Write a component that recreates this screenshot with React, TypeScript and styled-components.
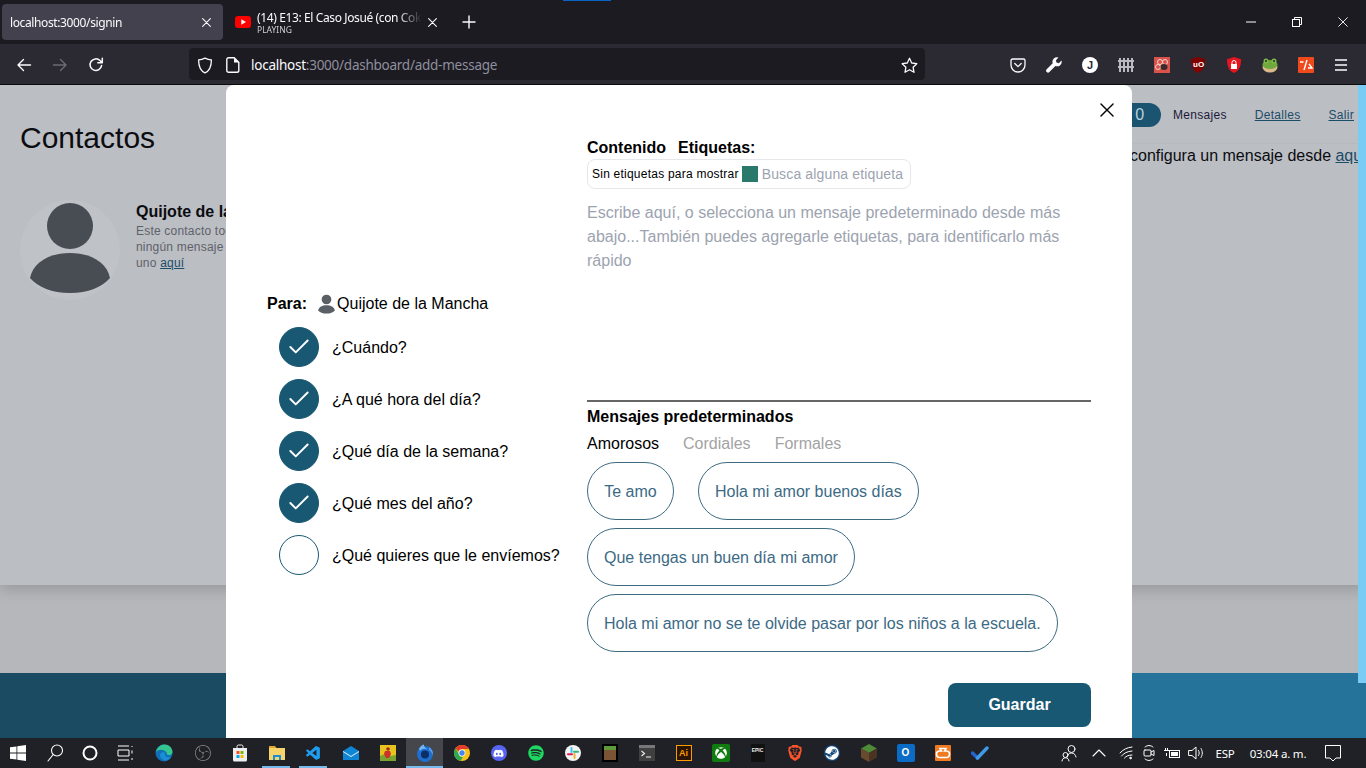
import React from "react";
import styled, { createGlobalStyle } from "styled-components";
import { Check } from "lucide-react";
import { FaDiscord, FaSpotify, FaSteam, FaXbox } from "react-icons/fa";
import { VscVscode } from "react-icons/vsc";
import { SiBrave, SiObsstudio } from "react-icons/si";

const Global = createGlobalStyle`
  html, body { margin: 0; padding: 0; background: #1c1b22; }
  * { box-sizing: border-box; }
  body { font-family: "Liberation Sans", Arial, sans-serif; }
`;

const Shell = styled.div`
  width: 1366px;
  height: 768px;
  display: flex;
  flex-direction: column;
  overflow: hidden;
`;

/* ---------- browser chrome ---------- */
const TabBar = styled.div`
  position: relative;
  flex: 0 0 44px;
  display: flex;
  background: #1c1b22;
  padding: 4px 0 4px 2px;
  font-family: "Noto Sans", sans-serif;
  color: #fbfbfe;
`;
const Indicator = styled.div`
  position: absolute;
  left: 563px;
  top: 0;
  width: 48px;
  height: 1px;
  background: #0a64c8;
`;
const Tab = styled.div<{ $active?: boolean }>`
  width: 221px;
  height: 36px;
  margin-right: 6px;
  padding: 0 ${(p) => (p.$active ? "12px" : "13px")} 0 ${(p) => (p.$active ? "8px" : "6px")};
  display: flex;
  align-items: center;
  gap: 6px;
  border-radius: 4px;
  background: ${(p) => (p.$active ? "#42414d" : "transparent")};
`;
const TabText = styled.div`
  flex: 1;
  min-width: 0;
  display: flex;
  flex-direction: column;
  white-space: nowrap;
  overflow: hidden;
  mask-image: linear-gradient(to right, #000 85%, transparent);
`;
const TabTitle = styled.span`
  font-size: 12px;
  line-height: 15px;
  letter-spacing: -0.38px;
`;
const TabSub = styled.span`
  font-size: 8.5px;
  line-height: 10px;
  color: #cfcfd6;
`;
const PlusBox = styled.div`
  width: 36px;
  height: 36px;
  margin-left: -5px;
  display: flex;
  align-items: center;
  justify-content: center;
`;
const WindowControls = styled.div`
  margin-left: auto;
  display: flex;
`;
const WinBtn = styled.div`
  width: 46px;
  height: 36px;
  display: flex;
  align-items: center;
  justify-content: center;
`;
const Toolbar = styled.div`
  flex: 0 0 41px;
  display: flex;
  align-items: flex-start;
  padding: 4px 6px 0;
  background: #2b2a33;
  border-bottom: 1px solid #0c0c0d;
`;
const ToolGroup = styled.div<{ $push?: boolean }>`
  display: flex;
  margin-left: ${(p) => (p.$push ? "auto" : "0")};
`;
const ToolBtn = styled.div`
  width: 36px;
  height: 32px;
  padding-top: 2px;
  display: flex;
  align-items: center;
  justify-content: center;
`;
const UrlBar = styled.div`
  margin-left: 75px;
  width: 736px;
  height: 32px;
  border-radius: 4px;
  background: #1c1b22;
  display: flex;
  align-items: center;
  padding: 2px 7px 0 2px;
  font-family: "Noto Sans", sans-serif;
  font-size: 13.5px;
  letter-spacing: -0.25px;
  color: #fbfbfe;
`;
const UrlIcon = styled.span`
  display: flex;
  width: 28px;
  flex: 0 0 28px;
  justify-content: center;
`;
const UrlText = styled.span`
  flex: 1;
  margin-left: 4px;
`;
const UrlDim = styled.span`
  color: #8f8f9d;
`;

/* ---------- page behind the modal ---------- */
const Page = styled.div`
  position: relative;
  flex: 1;
  min-height: 0;
  display: flex;
  flex-direction: column;
  background: #b5b7bb;
  overflow: hidden;
`;
const MainCard = styled.section`
  position: relative;
  z-index: 1;
  flex: 0 0 500px;
  display: flex;
  justify-content: space-between;
  padding-right: 8px;
  background: #bbbec3;
  box-shadow: 0 4px 14px rgba(0, 0, 0, 0.18);
  color: #0b0c10;
`;
const Spacer = styled.div`
  flex: 1;
`;
const Footer = styled.footer`
  flex: 0 0 65px;
  background: linear-gradient(to right, #1b4b62 17%, #25729b 83%);
`;
const Scrollbar = styled.div`
  position: absolute;
  z-index: 2;
  right: 0;
  top: 0;
  width: 8px;
  height: 598px;
  background: #7accf5;
`;
const ContactsPane = styled.div`
  padding: 35px 20px 0;
  width: 500px;
`;
const ContactsTitle = styled.h1`
  margin: 0 0 44px;
  font-size: 30px;
  line-height: 36px;
  font-weight: 400;
`;
const ContactRow = styled.div`
  display: flex;
  gap: 16px;
`;
const AvatarFrame = styled.div`
  flex: 0 0 100px;
  width: 100px;
  height: 100px;
  border-radius: 50%;
  background: #bfc2c6;
  color: #484d54;
`;
const ContactName = styled.div`
  font-size: 16px;
  line-height: 24px;
  margin-bottom: -1px;
  font-weight: 700;
`;
const ContactDesc = styled.p`
  margin: 0;
  width: 220px;
  font-size: 12px;
  line-height: 16px;
  letter-spacing: 0.2px;
  color: #5e6269;
`;
const DimLink = styled.a`
  color: #1b4c68;
  text-decoration: underline;
`;
const SidePane = styled.div`
  width: 358px;
  padding-top: 18px;
`;
const Nav = styled.nav`
  display: flex;
  align-items: center;
  justify-content: flex-end;
  gap: 28px;
  height: 24px;
  padding-right: 4px;
  margin-bottom: 16px;
  font-size: 12px;
  letter-spacing: 0.3px;
`;
const Pill = styled.span`
  width: 42px;
  height: 24px;
  margin-right: -16px;
  border-radius: 12px;
  background: #1b5470;
  color: #b9d2de;
  font-size: 16px;
  line-height: 24px;
  text-align: center;
`;
const NavLabel = styled.span`
  color: #1c1a38;
`;
const Notice = styled.div`
  border-top: 1px solid #b6b9be;
  margin-top: 0;
  padding-left: 130px;
  font-size: 16px;
  line-height: 23px;
  white-space: nowrap;
  overflow: hidden;
`;

/* ---------- modal ---------- */
const Modal = styled.div`
  position: absolute;
  z-index: 3;
  left: 226px;
  top: 0;
  width: 906px;
  height: 653px;
  padding: 50px 41px 0;
  display: flex;
  background: #fff;
  border-radius: 8px 8px 0 0;
  color: #000;
`;
const CloseBtn = styled.button`
  position: absolute;
  top: 15px;
  right: 15px;
  width: 20px;
  height: 20px;
  padding: 0;
  border: 0;
  background: none;
  display: flex;
  align-items: center;
  justify-content: center;
`;
const StepsColumn = styled.div`
  flex: 0 0 320px;
  padding-top: 156px;
`;
const ToLine = styled.div`
  display: flex;
  align-items: center;
  height: 24px;
  padding-top: 2px;
  font-size: 16px;
`;
const ToLabel = styled.strong`
  margin-right: 9px;
`;
const ToAvatar = styled.span`
  display: flex;
  width: 21px;
  height: 21px;
  color: #5b6066;
`;
const Steps = styled.ul`
  list-style: none;
  margin: 12px 0 0;
  padding: 0 0 0 12px;
  display: flex;
  flex-direction: column;
  gap: 12px;
`;
const Step = styled.li`
  display: flex;
  align-items: center;
  gap: 13px;
  height: 40px;
  font-size: 16px;
`;
const StepLabel = styled.span`
  padding-top: 2px;
`;
const StepDot = styled.span<{ $done: boolean }>`
  flex: 0 0 40px;
  height: 40px;
  border-radius: 50%;
  display: flex;
  align-items: center;
  justify-content: center;
  color: #fff;
  background: ${(p) => (p.$done ? "#185873" : "#fff")};
  border: 1px solid #185873;
`;
const ContentColumn = styled.div`
  flex: 1;
  display: flex;
  flex-direction: column;
`;
const HeadRow = styled.div`
  display: flex;
  gap: 12px;
  height: 24px;
  padding-top: 1px;
  font-size: 16px;
  line-height: 24px;
  font-weight: 700;
`;
const TagBox = styled.div`
  width: 324px;
  height: 30px;
  display: flex;
  align-items: center;
  padding: 0 4px;
  border: 1px solid #e5e7eb;
  border-radius: 8px;
  font-size: 12px;
  letter-spacing: 0.23px;
`;
const TagSwatch = styled.span`
  flex: 0 0 16px;
  height: 16px;
  margin: 0 4px 0 3px;
  background: #2a7a6b;
`;
const TagInput = styled.input`
  flex: 1;
  min-width: 0;
  border: 0;
  padding: 0;
  outline: none;
  font: 14px "Liberation Sans", Arial, sans-serif;
  letter-spacing: 0.14px;
  &::placeholder {
    color: #9ca3af;
    opacity: 1;
  }
`;
const MessageArea = styled.textarea`
  display: block;
  width: 504px;
  height: 200px;
  margin: 11px 0 0;
  padding: 1px 0 0;
  border: 0;
  outline: none;
  resize: none;
  overflow: hidden;
  font: 16px/24px "Liberation Sans", Arial, sans-serif;
  &::placeholder {
    color: #9ca3af;
    opacity: 1;
  }
`;
const Rule = styled.hr`
  width: 100%;
  height: 2px;
  margin: 0;
  border: 0;
  background: #666;
`;
const PresetTitle = styled.div`
  margin-top: 3px;
  font-size: 16px;
  line-height: 24px;
  font-weight: 700;
`;
const PresetTabs = styled.div`
  display: flex;
  gap: 24px;
  margin-top: 3px;
  font-size: 16px;
  line-height: 24px;
`;
const PresetTab = styled.span<{ $active?: boolean }>`
  color: ${(p) => (p.$active ? "#000" : "#a3a3a3")};
`;
const Chips = styled.div`
  display: flex;
  flex-wrap: wrap;
  gap: 8px 24px;
  margin-top: 6px;
`;
const Chip = styled.button`
  height: 58px;
  min-width: 87px;
  padding: 2px 16px 0;
  border: 1px solid #3d6b82;
  border-radius: 29px;
  background: #fff;
  color: #3c6a85;
  font: 16px "Liberation Sans", Arial, sans-serif;
  white-space: nowrap;
`;
const SaveRow = styled.div`
  display: flex;
  justify-content: flex-end;
  margin-top: 31px;
`;
const SaveBtn = styled.button`
  width: 143px;
  height: 44px;
  border: 0;
  border-radius: 8px;
  background: #185873;
  color: #fff;
  font: 700 16px "Liberation Sans", Arial, sans-serif;
`;

/* ---------- taskbar ---------- */
const Taskbar = styled.div`
  flex: 0 0 30px;
  display: flex;
  align-items: stretch;
  background: #202126;
  color: #fff;
  font-family: "Noto Sans", sans-serif;
`;
const TaskSlot = styled.div<{ $w?: number; $active?: boolean; $mark?: boolean }>`
  position: relative;
  flex: 0 0 ${(p) => p.$w ?? 37}px;
  display: flex;
  align-items: center;
  justify-content: center;
  background: ${(p) => (p.$active ? "#45474d" : "transparent")};
  &::after {
    content: "";
    display: ${(p) => (p.$active || p.$mark ? "block" : "none")};
    position: absolute;
    bottom: 0;
    left: ${(p) => (p.$active ? "0" : "4px")};
    right: ${(p) => (p.$active ? "0" : "5px")};
    height: 2px;
    background: #76b9ed;
  }
`;
const Tray = styled.div`
  margin-left: auto;
  display: flex;
  align-items: center;
`;
const TraySlot = styled.div<{ $w: number; $l?: number; $r?: number }>`
  width: ${(p) => p.$w}px;
  padding: 0 ${(p) => p.$r ?? 0}px 0 ${(p) => p.$l ?? 0}px;
  display: flex;
  justify-content: center;
  align-items: center;
  font-size: 11.5px;
  letter-spacing: -0.2px;
  white-space: nowrap;
`;
const AiBadge = styled.span`
  width: 16px;
  height: 16px;
  border: 1px solid #ff9a00;
  background: #2a1500;
  color: #ff9a00;
  font: 700 9px/14px "Liberation Sans", sans-serif;
  text-align: center;
`;
const LetterTile = styled.span<{ $bg: string }>`
  width: 18px;
  height: 18px;
  border-radius: 2px;
  background: ${(p) => p.$bg};
  color: #fff;
  font: 700 10px/18px "Liberation Sans", sans-serif;
  text-align: center;
`;
const EpicTile = styled.span`
  width: 14px;
  height: 18px;
  border-radius: 1px;
  background: #111;
  color: #eee;
  font: 700 5px/8px "Liberation Sans", sans-serif;
  padding-top: 2px;
  text-align: center;
`;
const Uo = styled.text`
  font: 700 8px "Liberation Sans", sans-serif;
  fill: #fff;
`;
const J = styled.span`
  width: 16px;
  height: 16px;
  border-radius: 50%;
  background: #fff;
  color: #2b2a33;
  font: 700 11px/16px "Liberation Sans", sans-serif;
  text-align: center;
`;

/* ---------- drawings ---------- */
type S = { s?: number };
const Line = (p: React.SVGProps<SVGSVGElement>) => (
  <svg fill="none" stroke="currentColor" strokeLinecap="round" strokeLinejoin="round" {...p} />
);
const X = ({ s = 9, c = "#fbfbfe", w = 1.2 }: S & { c?: string; w?: number }) => (
  <Line width={s} height={s} viewBox="0 0 10 10" style={{ color: c }} strokeWidth={w}>
    <path d="M.7.7l8.6 8.6M9.3.7L.7 9.3" />
  </Line>
);
const Person = () => (
  <svg width="100%" height="100%" viewBox="0 0 100 100" fill="currentColor">
    <circle cx="50" cy="26" r="23" />
    <path d="M10 78C13 62 30 53 50 53s37 9 40 25c-8 9-22 15-40 15S18 87 10 78z" />
  </svg>
);
const YouTube = () => (
  <svg width="16" height="12" viewBox="0 0 16 12">
    <rect width="16" height="12" rx="3" fill="#f00" />
    <path d="M6.3 3.3v5.4L11 6z" fill="#fff" />
  </svg>
);
const Back = () => (
  <Line width="16" height="16" viewBox="0 0 16 16" color="#fbfbfe" strokeWidth="1.4">
    <path d="M14.5 8H2M7.5 2.5L2 8l5.5 5.5" />
  </Line>
);
const Forward = () => (
  <Line width="16" height="16" viewBox="0 0 16 16" color="#6c6b74" strokeWidth="1.4">
    <path d="M1.5 8H14M8.5 2.5L14 8l-5.5 5.5" />
  </Line>
);
const Reload = () => (
  <Line width="16" height="16" viewBox="0 0 16 16" color="#fbfbfe" strokeWidth="1.5">
    <path d="M13.6 8.4A5.8 5.8 0 1 1 12 3.6L14 5.6M14.3 1.2v4.5H9.8" />
  </Line>
);
const Shield = () => (
  <Line width="16" height="17" viewBox="0 0 16 17" color="#fbfbfe" strokeWidth="1.3">
    <path d="M8 1.2c2 1 4 1.6 6.4 1.7 0 6.500-1.800 10.800-6.400 13-4.600-2.200-6.400-6.500-6.400-13C4 2.800 6 2.200 8 1.200z" />
  </Line>
);
const PageIcon = () => (
  <svg width="14" height="16" viewBox="0 0 14 16">
    <path d="M2.600.8h5.600l4.600 4.600v8a1.800 1.800 0 0 1-1.800 1.800H2.600A1.800 1.800 0 0 1 .8 13.400V2.600A1.800 1.800 0 0 1 2.600.8z" fill="none" stroke="#fbfbfe" strokeWidth="1.400" />
    <path d="M8 1v4.600h4.600z" fill="#fbfbfe" />
  </svg>
);
const Star = () => (
  <Line width="17" height="17" viewBox="0 0 17 17" color="#fbfbfe" strokeWidth="1.3">
    <path d="M8.500 1.300l2.200 4.700 5.100.7-3.700 3.500.9 5.100-4.500-2.500L4 15.300l.9-5.100L1.200 6.700l5.100-.7z" />
  </Line>
);
const Pocket = () => (
  <Line width="16" height="15" viewBox="0 0 16 15" color="#fbfbfe" strokeWidth="1.300">
    <path d="M2.500 1h11A1.500 1.500 0 0 1 15 2.500V7A7 7 0 0 1 1 7V2.500A1.500 1.500 0 0 1 2.500 1z" />
    <path d="M4.800 5.500L8 8.600l3.200-3.100" />
  </Line>
);
const Wrench = () => (
  <svg width="16" height="16" viewBox="0 0 16 16" fill="#fbfbfe">
    <path d="M15.500 3.500l-2.700 2.700-2.300-.6-.6-2.300L12.500.6a4.500 4.500 0 0 0-5.800 5.700L.7 12.300a1.900 1.900 0 0 0 2.700 2.700l6-6.100a4.500 4.500 0 0 0 6.100-5.400z" />
  </svg>
);
const Rail = () => (
  <svg width="16" height="14" viewBox="0 0 16 14" fill="#b9b9bf">
    <path d="M0 2h16v2H0zM0 8h16v2H0zM1 0h2v14H1zM5 0h2v14H5zM9 0h2v14H9zM13 0h2v14h-2z" />
  </svg>
);
const BugTile = () => (
  <svg width="16" height="16" viewBox="0 0 16 16">
    <rect width="16" height="16" fill="#d9534a" />
    <circle cx="6" cy="5" r="2.500" fill="none" stroke="#f3d2cd" />
    <circle cx="11" cy="5" r="2.500" fill="none" stroke="#f3d2cd" />
    <circle cx="4" cy="10" r="2.500" fill="none" stroke="#f3d2cd" />
    <ellipse cx="10" cy="10" rx="3.500" ry="3" fill="#3a2a2a" />
  </svg>
);
const UBlock = () => (
  <svg width="16" height="16" viewBox="0 0 16 16">
    <path d="M8 0l7 2c0 7-1.500 11.500-7 14C2.500 13.500 1 9 1 2z" fill="#800000" />
    <Uo x="3" y="10">uO</Uo>
  </svg>
);
const LockShield = () => (
  <svg width="16" height="16" viewBox="0 0 16 16">
    <path d="M8 0l7 2.200c0 7-1.500 11.300-7 13.800C2.500 13.500 1 9.200 1 2.200z" fill="#e6141e" />
    <rect x="5" y="7" width="6" height="5" fill="#fff" />
    <path d="M6 7V5.500a2 2 0 0 1 4 0V7" fill="none" stroke="#fff" />
  </svg>
);
const Frog = () => (
  <svg width="16" height="16" viewBox="0 0 16 16">
    <ellipse cx="8" cy="10" rx="7.500" ry="5.500" fill="#d9b98a" />
    <ellipse cx="8" cy="7.500" rx="7.500" ry="4.500" fill="#6fa83c" />
    <circle cx="4" cy="4" r="2.500" fill="#7dbb45" />
    <circle cx="12" cy="4" r="2.500" fill="#7dbb45" />
    <circle cx="4" cy="4" r="1" fill="#222" />
    <circle cx="12" cy="4" r="1" fill="#222" />
  </svg>
);
const SlashTile = () => (
  <svg width="16" height="16" viewBox="0 0 16 16">
    <rect width="16" height="16" rx="1" fill="#f0491c" />
    <path d="M2 5h3.500M9 3l-3 10M11 7l3 4h-4" fill="none" stroke="#fff" strokeWidth="1.400" />
  </svg>
);
const Burger = () => (
  <Line width="16" height="14" viewBox="0 0 16 14" color="#fbfbfe" strokeWidth="1.400" strokeLinecap="butt">
    <path d="M1 2h12M1 7h12M1 12h12" />
  </Line>
);

const Win = () => (
  <svg width="16" height="16" viewBox="0 0 16 16" fill="#fff">
    <path d="M0 2.300L6.500 1.400v6.200H0zM7.300 1.300L16 0v7.600H7.300zM0 8.400h6.500v6.200L0 13.700zM7.300 8.400H16V16l-8.700-1.200z" />
  </svg>
);
const Search = () => (
  <Line width="16" height="18" viewBox="0 0 16 18" color="#fff" strokeWidth="1.100">
    <circle cx="10" cy="6.500" r="5.500" />
    <path d="M6.200 10.500L1 17" />
  </Line>
);
const Ring = () => (
  <Line width="16" height="16" viewBox="0 0 16 16" color="#fff" strokeWidth="2">
    <circle cx="8" cy="8" r="6.500" />
  </Line>
);
const TaskView = () => (
  <Line width="18" height="16" viewBox="0 0 18 16" color="#fff" strokeWidth="1" strokeLinecap="butt">
    <path d="M1 1h11M1 15h11M1 5h11v6H1zM15 1v1M15 5.500v3M15 13v2" />
  </Line>
);
const Edge = () => (
  <svg width="18" height="18" viewBox="0 0 18 18">
    <circle cx="9" cy="9" r="8.500" fill="#0f6fb8" />
    <path d="M1 8C2 3 6 .5 9.500.500c4.500 0 8 3.500 8 7.500 0 2.500-2.500 3.500-4.500 3-1-.3-1.500-1-1.200-2C10.500 6 4 4 1 8z" fill="#35c58e" />
    <path d="M6 14c-2-2-1-6 3-6 2 0-1 7 7 5-2 3.500-7 5-10 1z" fill="#1a8fd6" />
  </svg>
);
const Store = () => (
  <svg width="16" height="18" viewBox="0 0 16 18">
    <path d="M1 4h14v12a1.500 1.500 0 0 1-1.500 1.500h-11A1.500 1.500 0 0 1 1 16z" fill="#eee" />
    <path d="M5 4V2.500A1.500 1.500 0 0 1 6.500 1h3A1.500 1.500 0 0 1 11 2.500V4" fill="none" stroke="#eee" />
    <path d="M4.500 7h3v3h-3z" fill="#f25022" />
    <path d="M8.500 7h3v3h-3z" fill="#7fba00" />
    <path d="M4.500 11h3v3h-3z" fill="#00a4ef" />
    <path d="M8.500 11h3v3h-3z" fill="#ffb900" />
  </svg>
);
const Folder = () => (
  <svg width="16" height="16" viewBox="0 0 16 16">
    <path d="M0 1h6l1.500 2H0z" fill="#e0a82e" />
    <rect y="3" width="16" height="12" fill="#f6d36b" />
    <path d="M4 10h8v5h-2v-3H6v3H4z" fill="#1b8fd6" />
  </svg>
);
const Mail = () => (
  <svg width="16" height="16" viewBox="0 0 16 16">
    <path d="M0 6l8-5 8 5v9H0z" fill="#0f85d6" />
    <path d="M0 6l8 5 8-5v1L8 12 0 7z" fill="#e8f4fb" />
  </svg>
);
const Game = () => (
  <svg width="16" height="16" viewBox="0 0 16 16">
    <rect width="16" height="16" fill="#e8c21f" />
    <path d="M0 11l5-2 6 2 5-1v6H0z" fill="#7aa32f" />
    <path d="M5 6h5l1 3-2 4H6L4 9z" fill="#c9352b" />
    <circle cx="8" cy="4" r="1.800" fill="#a02820" />
  </svg>
);
const Firefox = () => (
  <svg width="18" height="18" viewBox="0 0 18 18">
    <circle cx="9" cy="10" r="8" fill="#1f6fd0" />
    <circle cx="9" cy="10.500" r="4" fill="#0d2f66" />
    <path d="M3 5c1-3 4-4.500 5-4.500C7.500 3 10 3.500 11 5.500 8.500 4 5.500 5 4 7z" fill="#6fb6f5" />
    <path d="M13 3c3 2 4.500 5 4 8-1-2-2-4-4-5z" fill="#5a9df0" />
  </svg>
);
const Chrome = () => (
  <svg width="16" height="16" viewBox="0 0 16 16">
    <circle cx="8" cy="8" r="8" fill="#fbc116" />
    <path d="M8 0a8 8 0 0 1 7 4H8a4 4 0 0 0-3.700 2.500L1.500 3.300A8 8 0 0 1 8 0z" fill="#e33b2e" />
    <path d="M1.500 3.300l3.500 6.200A4 4 0 0 0 9 12l-2.500 3.900A8 8 0 0 1 1.500 3.300z" fill="#2fa84f" />
    <circle cx="8" cy="8" r="3.400" fill="#fff" />
    <circle cx="8" cy="8" r="2.700" fill="#4285f4" />
  </svg>
);
const Round = styled.span<{ $bg: string }>`
  width: 16px;
  height: 16px;
  border-radius: 50%;
  background: ${(p) => p.$bg};
  display: flex;
  align-items: center;
  justify-content: center;
  color: #fff;
`;
const Slack = () => (
  <svg width="16" height="16" viewBox="0 0 16 16">
    <circle cx="8" cy="8" r="8" fill="#f4f4f4" />
    <path d="M6.500 3v4" stroke="#36c5f0" strokeWidth="2" strokeLinecap="round" />
    <path d="M3 9.300h4" stroke="#e01e5a" strokeWidth="2" strokeLinecap="round" />
    <path d="M9.500 9v4" stroke="#ecb22e" strokeWidth="2" strokeLinecap="round" />
    <path d="M9 6.700h4" stroke="#2eb67d" strokeWidth="2" strokeLinecap="round" />
  </svg>
);
const Block = () => (
  <svg width="16" height="18" viewBox="0 0 16 18">
    <rect width="16" height="18" fill="#000" />
    <rect x="2" y="2" width="12" height="14" fill="#7a5434" />
    <rect x="2" y="2" width="12" height="4" fill="#5f9a3a" />
  </svg>
);
const Terminal = () => (
  <svg width="16" height="16" viewBox="0 0 16 16">
    <rect width="16" height="16" fill="#404040" />
    <rect width="16" height="3" fill="#777" />
    <path d="M2.500 6l3 2.500-3 2.500M7 12h5" fill="none" stroke="#eee" strokeWidth="1.100" />
  </svg>
);
const Cube = () => (
  <svg width="16" height="18" viewBox="0 0 16 18">
    <path d="M8 0l8 4.500-8 4.500L0 4.500z" fill="#4e8a37" />
    <path d="M0 4.500L8 9v9l-8-4.500z" fill="#6a4a2e" />
    <path d="M16 4.500L8 9v9l8-4.500z" fill="#4a3320" />
  </svg>
);
const Xampp = () => (
  <svg width="16" height="16" viewBox="0 0 16 16">
    <rect width="16" height="16" rx="1" fill="#ee7b22" />
    <path d="M5 3.500h6L9.500 6h2A2.500 2.500 0 0 1 11 12.500H5A2.500 2.500 0 0 1 4.500 6h2z" fill="none" stroke="#fff" strokeWidth="1.600" />
  </svg>
);
const Todo = () => (
  <svg width="18" height="16" viewBox="0 0 18 16" fill="none">
    <path d="M1.500 8l5 5" stroke="#2564cf" strokeWidth="3.400" strokeLinecap="round" />
    <path d="M6.500 13L16 3" stroke="#3d9be9" strokeWidth="3.400" strokeLinecap="round" />
  </svg>
);
const People = () => (
  <Line width="16" height="18" viewBox="0 0 16 18" color="#fff" strokeWidth="1">
    <circle cx="10.500" cy="5" r="3.500" />
    <path d="M6 13c.5-2.500 2-4 4.500-4s3.800 1.500 4.500 4" />
    <circle cx="4.500" cy="11" r="2.500" />
    <path d="M1 17c.2-2 1.500-3.200 3.500-3.200S7.800 15 8 17" />
  </Line>
);
const Chevron = () => (
  <Line width="14" height="8" viewBox="0 0 14 8" color="#fff" strokeWidth="1.100">
    <path d="M1 7l6-6 6 6" />
  </Line>
);
const Wifi = () => (
  <Line width="14" height="14" viewBox="0 0 14 14" color="#fff" strokeWidth="1">
    <path d="M1 7C4 3.500 8 1.500 13 1M2.500 10C5 7 8 5.500 13 5M5.500 12c1.500-1.800 4-3 7.500-3" />
    <circle cx="11.500" cy="12" r=".8" fill="#fff" />
  </Line>
);
const Meet = () => (
  <Line width="12" height="18" viewBox="0 0 12 18" color="#fff" strokeWidth="1">
    <path d="M2 3c2.500-2 5.500-2 8 0M2 15c2.500 2 5.500 2 8 0" />
    <rect x="1" y="6" width="7" height="6" rx="1" />
    <path d="M8 8l3-1.500v5L8 10" />
  </Line>
);
const Battery = () => (
  <svg width="16" height="12" viewBox="0 0 16 12" fill="none" stroke="#fff">
    <rect x="5.500" y="3.500" width="10" height="7" />
    <rect x="7" y="5" width="7" height="4" fill="#fff" stroke="none" />
    <path d="M0 3.500h5M1.500 1v2.500M3.500 1v2.500M2.500 6v3" />
  </svg>
);
const Speaker = () => (
  <Line width="17" height="16" viewBox="0 0 17 16" color="#fff" strokeWidth="1">
    <path d="M1 5.500h3L8 2v12l-4-3.500H1z" />
    <path d="M10.500 5.500c1 1.500 1 3.500 0 5M13 3.500c1.800 2.800 1.800 6.200 0 9" />
  </Line>
);
const Bubble = () => (
  <Line width="16" height="17" viewBox="0 0 16 17" color="#fff" strokeWidth="1" strokeLinecap="butt">
    <path d="M.5.500h15v12.500H11L8 16l-3-3H.5z" />
  </Line>
);

const taskItems: { icon: React.ReactNode; w?: number; active?: boolean; mark?: boolean }[] = [
  { icon: <Win />, w: 36 },
  { icon: <Search /> },
  { icon: <Ring />, w: 34 },
  { icon: <TaskView /> },
  { icon: <Edge />, w: 40 },
  { icon: <SiObsstudio size={16} color="#8a8a8a" /> },
  { icon: <Store /> },
  { icon: <Folder />, mark: true },
  { icon: <VscVscode size={17} color="#1f9cf0" />, mark: true },
  { icon: <Mail /> },
  { icon: <Game /> },
  { icon: <Firefox />, active: true },
  { icon: <Chrome /> },
  { icon: <Round $bg="#5865f2"><FaDiscord size={11} /></Round> },
  { icon: <FaSpotify size={16} color="#1ed760" /> },
  { icon: <Slack /> },
  { icon: <Block /> },
  { icon: <Terminal /> },
  { icon: <AiBadge>Ai</AiBadge> },
  { icon: <LetterTile $bg="#107c10"><FaXbox size={12} style={{ marginTop: 3 }} /></LetterTile> },
  { icon: <EpicTile>EPIC</EpicTile> },
  { icon: <SiBrave size={16} color="#fb542b" /> },
  { icon: <Round $bg="#134a7e"><FaSteam size={14} /></Round> },
  { icon: <Cube /> },
  { icon: <LetterTile $bg="#0a6cc4">O</LetterTile> },
  { icon: <Xampp /> },
  { icon: <Todo /> },
];

const toolIcons = [
  <Pocket key="a" />,
  <Wrench key="b" />,
  <J key="c">J</J>,
  <Rail key="d" />,
  <BugTile key="e" />,
  <UBlock key="f" />,
  <LockShield key="g" />,
  <Frog key="h" />,
  <SlashTile key="i" />,
  <Burger key="j" />,
];

const steps = [
  { label: "¿Cuándo?", done: true },
  { label: "¿A qué hora del día?", done: true },
  { label: "¿Qué día de la semana?", done: true },
  { label: "¿Qué mes del año?", done: true },
  { label: "¿Qué quieres que le envíemos?", done: false },
];

const chips = [
  "Te amo",
  "Hola mi amor buenos días",
  "Que tengas un buen día mi amor",
  "Hola mi amor no se te olvide pasar por los niños a la escuela.",
];

export default function App() {
  return (
    <Shell>
      <Global />
      <TabBar>
        <Indicator />
        <Tab $active>
          <TabText>
            <TabTitle>localhost:3000/signin</TabTitle>
          </TabText>
          <X />
        </Tab>
        <Tab>
          <YouTube />
          <TabText>
            <TabTitle>(14) E13: El Caso Josué (con Cokito y más)</TabTitle>
            <TabSub>PLAYING</TabSub>
          </TabText>
          <X />
        </Tab>
        <PlusBox>
          <Line width="14" height="14" viewBox="0 0 14 14" color="#fbfbfe" strokeWidth="1.400">
            <path d="M7 1v12M1 7h12" />
          </Line>
        </PlusBox>
        <WindowControls>
          <WinBtn>
            <svg width="10" height="2" viewBox="0 0 10 2"><path d="M0 1h10" stroke="#fff" /></svg>
          </WinBtn>
          <WinBtn>
            <svg width="10" height="10" viewBox="0 0 10 10" fill="none" stroke="#fff">
              <rect x=".5" y="2.500" width="7" height="7" />
              <path d="M2.500 2.500V.5h7v7h-2" />
            </svg>
          </WinBtn>
          <WinBtn>
            <X s={10} c="#fff" w={0.9} />
          </WinBtn>
        </WindowControls>
      </TabBar>
      <Toolbar>
        <ToolGroup>
          <ToolBtn><Back /></ToolBtn>
          <ToolBtn><Forward /></ToolBtn>
          <ToolBtn><Reload /></ToolBtn>
        </ToolGroup>
        <UrlBar>
          <UrlIcon><Shield /></UrlIcon>
          <UrlIcon><PageIcon /></UrlIcon>
          <UrlText>localhost<UrlDim>:3000/dashboard/add-message</UrlDim></UrlText>
          <Star />
        </UrlBar>
        <ToolGroup $push>
          {toolIcons.map((icon, i) => (
            <ToolBtn key={i}>{icon}</ToolBtn>
          ))}
        </ToolGroup>
      </Toolbar>
      <Page>
        <MainCard>
          <ContactsPane>
            <ContactsTitle>Contactos</ContactsTitle>
            <ContactRow>
              <AvatarFrame><Person /></AvatarFrame>
              <div>
                <ContactName>Quijote de la Mancha</ContactName>
                <ContactDesc>
                  Este contacto todavía no recibe
                  <br />
                  ningún mensaje configurado,
                  <br />
                  uno <DimLink>aquí</DimLink>
                </ContactDesc>
              </div>
            </ContactRow>
          </ContactsPane>
          <SidePane>
            <Nav>
              <Pill>0</Pill>
              <NavLabel>Mensajes</NavLabel>
              <DimLink>Detalles</DimLink>
              <DimLink>Salir</DimLink>
            </Nav>
            <Notice>
              configura un mensaje desde <DimLink>aquí</DimLink>
            </Notice>
          </SidePane>
        </MainCard>
        <Spacer />
        <Footer />
        <Scrollbar />
        <Modal>
          <CloseBtn aria-label="Cerrar">
            <X s={14} c="#000" w={1} />
          </CloseBtn>
          <StepsColumn>
            <ToLine>
              <ToLabel>Para:</ToLabel>
              <ToAvatar><Person /></ToAvatar>
              Quijote de la Mancha
            </ToLine>
            <Steps>
              {steps.map((step) => (
                <Step key={step.label}>
                  <StepDot $done={step.done}>
                    {step.done && <Check size={26} strokeWidth={1.800} />}
                  </StepDot>
                  <StepLabel>{step.label}</StepLabel>
                </Step>
              ))}
            </Steps>
          </StepsColumn>
          <ContentColumn>
            <HeadRow>
              <span>Contenido</span>
              <span>Etiquetas:</span>
            </HeadRow>
            <TagBox>
              Sin etiquetas para mostrar
              <TagSwatch />
              <TagInput placeholder="Busca alguna etiqueta" />
            </TagBox>
            <MessageArea placeholder="Escribe aquí, o selecciona un mensaje predeterminado desde más abajo...También puedes agregarle etiquetas, para identificarlo más rápido" />
            <Rule />
            <PresetTitle>Mensajes predeterminados</PresetTitle>
            <PresetTabs>
              <PresetTab $active>Amorosos</PresetTab>
              <PresetTab>Cordiales</PresetTab>
              <PresetTab>Formales</PresetTab>
            </PresetTabs>
            <Chips>
              {chips.map((chip) => (
                <Chip key={chip}>{chip}</Chip>
              ))}
            </Chips>
            <SaveRow>
              <SaveBtn>Guardar</SaveBtn>
            </SaveRow>
          </ContentColumn>
        </Modal>
      </Page>
      <Taskbar>
        {taskItems.map((item, i) => (
          <TaskSlot key={i} $w={item.w} $active={item.active} $mark={item.mark}>
            {item.icon}
          </TaskSlot>
        ))}
        <Tray>
          <TraySlot $w={30}><People /></TraySlot>
          <TraySlot $w={30}><Chevron /></TraySlot>
          <TraySlot $w={24}><Wifi /></TraySlot>
          <TraySlot $w={22}><Meet /></TraySlot>
          <TraySlot $w={24}><Battery /></TraySlot>
          <TraySlot $w={24}><Speaker /></TraySlot>
          <TraySlot $w={36} $r={2}>ESP</TraySlot>
          <TraySlot $w={62} $l={6}>03:04 a. m.</TraySlot>
          <TraySlot $w={60} $r={6}><Bubble /></TraySlot>
        </Tray>
      </Taskbar>
    </Shell>
  );
}
